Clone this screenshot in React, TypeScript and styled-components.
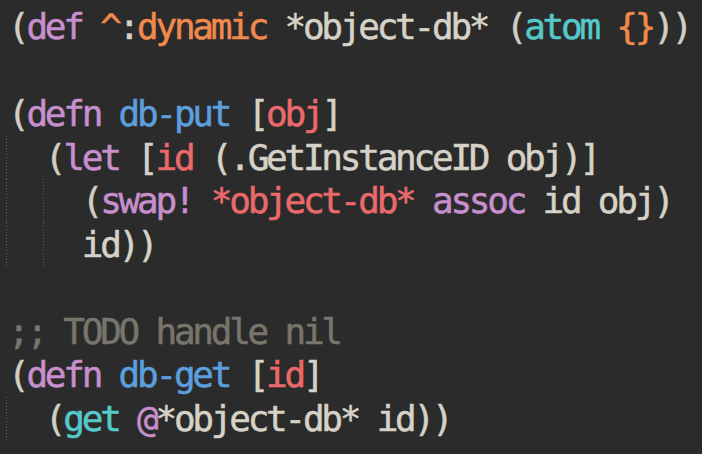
import React from "react";
import styled, { createGlobalStyle } from "styled-components";

const CHAR = 18.43;
const LINE = 43.5;

const Global = createGlobalStyle`
  html, body {
    margin: 0;
    padding: 0;
    background: #2b2b2b;
  }
  #root {
    min-height: 100vh;
  }
`;

const Editor = styled.pre`
  margin: 0;
  padding: 5px 0 0 8px;
  min-height: 100vh;
  box-sizing: border-box;
  background: #2b2b2b;
  font-family: "DejaVu Sans Mono", "Liberation Mono", monospace;
  font-size: 36px;
  letter-spacing: ${CHAR - 36 * 0.602}px;
  line-height: ${LINE}px;
  color: #d6d2c7;
  white-space: pre;
  overflow: hidden;
  -webkit-text-stroke: 0.5px currentColor;
`;

const Line = styled.div`
  display: block;
  height: ${LINE}px;
`;

const Indent = styled.span<{ $guide: boolean }>`
  display: inline-block;
  vertical-align: top;
  width: ${CHAR * 2}px;
  height: ${LINE}px;
  margin-left: ${(p) => (p.$guide ? -2 : 0)}px;
  padding-left: ${(p) => (p.$guide ? 2 : 0)}px;
  background-image: ${(p) =>
    p.$guide
      ? "repeating-linear-gradient(to bottom, #5e5e5e 0 1px, transparent 1px 3px)"
      : "none"};
  background-repeat: no-repeat;
  background-size: 1px 100%;
  background-position: 0 0;
`;

type Kind = "plain" | "paren" | "kw" | "fn" | "core" | "meta" | "local" | "comment";

const colors: Record<Kind, string> = {
  plain: "#d6d2c7",
  paren: "#d2cec3",
  kw: "#c78fcd",
  fn: "#5b9fdc",
  core: "#55c9c9",
  meta: "#ef8a4c",
  local: "#ea6a6b",
  comment: "#78756d",
};

const Tok = styled.span<{ $kind: Kind }>`
  color: ${(p) => colors[p.$kind]};
`;

type Token = [Kind, string];
type CodeLine = { indent: number; tokens: Token[] };

const code: CodeLine[] = [
  {
    indent: 0,
    tokens: [
      ["paren", "("],
      ["kw", "def"],
      ["plain", " "],
      ["meta", "^"],
      ["plain", ":"],
      ["meta", "dynamic"],
      ["plain", " *object-db* "],
      ["paren", "("],
      ["core", "atom"],
      ["plain", " "],
      ["meta", "{}"],
      ["paren", "))"],
    ],
  },
  { indent: 0, tokens: [] },
  {
    indent: 0,
    tokens: [
      ["paren", "("],
      ["kw", "defn"],
      ["plain", " "],
      ["fn", "db-put"],
      ["plain", " ["],
      ["local", "obj"],
      ["plain", "]"],
    ],
  },
  {
    indent: 1,
    tokens: [
      ["paren", "("],
      ["kw", "let"],
      ["plain", " ["],
      ["local", "id"],
      ["plain", " (.GetInstanceID obj)]"],
    ],
  },
  {
    indent: 2,
    tokens: [
      ["paren", "("],
      ["kw", "swap!"],
      ["plain", " "],
      ["local", "*object-db*"],
      ["plain", " "],
      ["kw", "assoc"],
      ["plain", " id obj)"],
    ],
  },
  { indent: 2, tokens: [["plain", "id))"]] },
  { indent: 0, tokens: [] },
  { indent: 0, tokens: [["comment", ";; TODO handle nil"]] },
  {
    indent: 0,
    tokens: [
      ["paren", "("],
      ["kw", "defn"],
      ["plain", " "],
      ["fn", "db-get"],
      ["plain", " ["],
      ["local", "id"],
      ["plain", "]"],
    ],
  },
  {
    indent: 1,
    tokens: [
      ["paren", "("],
      ["core", "get"],
      ["plain", " "],
      ["kw", "@"],
      ["plain", "*object-db* id))"],
    ],
  },
];

export default function App() {
  return (
    <>
      <Global />
      <Editor>
        {code.map((line, i) => (
          <Line key={i}>
            {Array.from({ length: line.indent }).map((_, j) => (
              <Indent key={j} $guide />
            ))}
            {line.tokens.map(([kind, text], j) => (
              <Tok key={j} $kind={kind}>
                {text}
              </Tok>
            ))}
          </Line>
        ))}
      </Editor>
    </>
  );
}
